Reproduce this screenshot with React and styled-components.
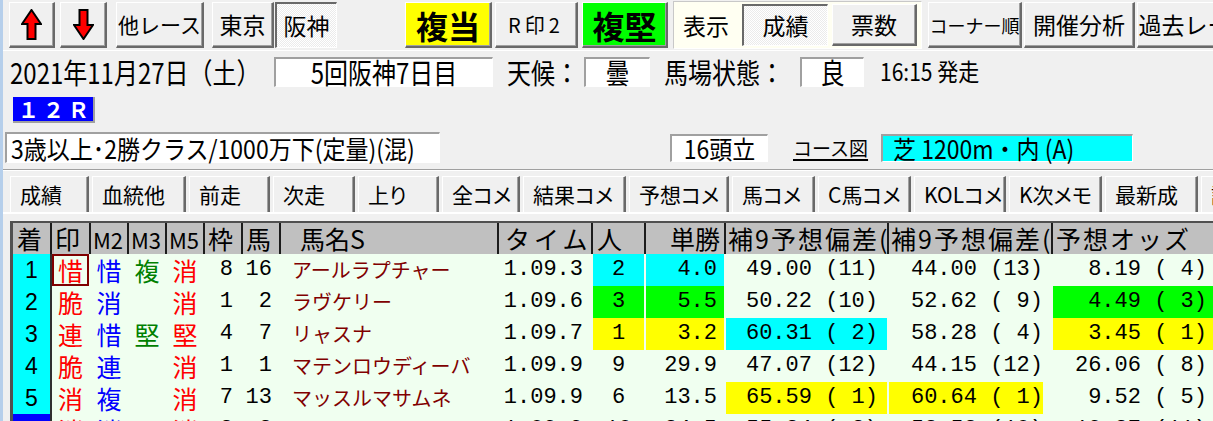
import React from "react";
import styled, { createGlobalStyle, css } from "styled-components";

const JP = `"Noto Sans CJK JP", "Noto Sans", sans-serif`;
const MONO = `"Liberation Mono", "DejaVu Sans Mono", monospace`;
const SANS = `"Liberation Sans", Arial, sans-serif`;

const RED = "#ff0000";
const BLUE = "#0000ff";
const GREEN = "#008000";
const MAROON = "#800000";
const CYAN = "#00ffff";
const LIME = "#00ff00";
const YELLOW = "#ffff00";

const GlobalStyle = createGlobalStyle`
  html, body {
    margin: 0;
    padding: 0;
    background: #f0f0f0;
  }
  body {
    font-family: ${JP};
    color: #000;
  }
`;

// win32-ish bevels
const raised = css`
  box-sizing: border-box;
  border-style: solid;
  border-width: 1px 2px 2px 1px;
  border-color: #ffffff #696969 #696969 #ffffff;
  box-shadow: inset -1px -1px 0 #a0a0a0;
`;

const pressed = css`
  box-sizing: border-box;
  border-style: solid;
  border-width: 2px 1px 1px 2px;
  border-color: #696969 #ffffff #ffffff #696969;
  background-color: #fafafa;
  background-image: conic-gradient(#ffffff 25%, #ebebeb 0 50%, #ffffff 0 75%, #ebebeb 0);
  background-size: 2px 2px;
`;

const sunken = css`
  box-sizing: border-box;
  border-style: solid;
  border-width: 2px 1px 1px 2px;
  border-color: #a0a0a0 #ffffff #ffffff #a0a0a0;
`;

const Window = styled.div`
  width: 1213px;
  height: 421px;
  overflow: hidden;
  box-sizing: border-box;
  border-left: 3px solid #b6cfeb;
  background: #f0f0f0;
  display: flex;
  flex-direction: column;
`;

/* ---------- toolbar ---------- */

const Toolbar = styled.div`
  flex-shrink: 0;
  display: flex;
  align-items: center;
  height: 50px;
  padding-left: 6px;
  border-bottom: 1px solid #ffffff;
`;

const ToolButton = styled.div`
  ${(p) => (p.$on ? pressed : raised)}
  ${(p) => !p.$on && css`background-color: ${p.$bg || "#f0f0f0"};`}
  flex-shrink: 0;
  width: ${(p) => p.$w}px;
  height: ${(p) => p.$h || 46}px;
  margin-left: ${(p) => p.$ml || 0}px;
  display: flex;
  align-items: center;
  justify-content: center;
  font-family: ${JP};
  font-size: ${(p) => p.$fs || 22}px;
  font-weight: ${(p) => (p.$bold ? 700 : 400)};
  letter-spacing: ${(p) => p.$ls || 0}px;
  line-height: 1;
  white-space: nowrap;
  overflow: hidden;
`;

const ViewPanel = styled.div`
  flex-shrink: 0;
  box-sizing: border-box;
  display: flex;
  align-items: center;
  width: 249px;
  height: 48px;
  margin-left: 5px;
  padding: 0 4px 0 9px;
  border: 1px solid;
  border-color: #c8c8c8 #ffffff #ffffff #c8c8c8;
  background: #fffff2;
`;

const PanelLabel = styled.span`
  flex-shrink: 0;
  width: 46px;
  margin-right: 13px;
  font-size: 23px;
  line-height: 1;
`;

const ArrowIcon = ({ down }) => (
  <svg width="21" height="31" viewBox="0 0 21 31">
    <polygon
      points="10.5,1 20,15 14.5,15 14.5,30 6.5,30 6.5,15 1,15"
      fill="#ff0000"
      stroke="#000"
      strokeWidth="2"
      transform={down ? "rotate(180 10.5 15.5)" : undefined}
    />
  </svg>
);

/* ---------- race info ---------- */

const InfoRow = styled.div`
  flex-shrink: 0;
  display: flex;
  align-items: center;
  height: 37px;
  margin-top: 2px;
  padding-left: 7px;
`;

const InfoText = styled.span`
  flex-shrink: 0;
  display: inline-block;
  width: ${(p) => (p.$w ? `${p.$w}px` : "auto")};
  margin-left: ${(p) => p.$ml || 0}px;
  font-size: ${(p) => p.$fs || 24}px;
  line-height: 1;
  white-space: nowrap;
  transform: scaleY(${(p) => p.$sy || 1.2});
`;

const Field = styled.div`
  ${sunken}
  flex-shrink: 0;
  display: flex;
  align-items: center;
  justify-content: ${(p) => (p.$left ? "flex-start" : "center")};
  width: ${(p) => p.$w}px;
  height: ${(p) => p.$h || 30}px;
  margin-left: ${(p) => p.$ml || 0}px;
  padding-left: ${(p) => p.$pl || 0}px;
  background: ${(p) => p.$bg || "#ffffff"};
  font-size: ${(p) => p.$fs || 24}px;
  line-height: 1;
  white-space: nowrap;
`;

const RaceBadge = styled.div`
  flex-shrink: 0;
  box-sizing: border-box;
  display: flex;
  align-items: center;
  width: 82px;
  height: 26px;
  margin: 7px 0 0 10px;
  padding-left: 5px;
  background: #0000ff;
  border-right: 2px solid #a0a0a0;
  border-bottom: 2px solid #a0a0a0;
  color: #ffffff;
  font-size: 21px;
  font-weight: 700;
  letter-spacing: 4px;
  line-height: 1;
`;

const ClassRow = styled.div`
  flex-shrink: 0;
  display: flex;
  align-items: center;
  height: 31px;
  margin-top: 9px;
  padding-left: 2px;
`;

const CourseLink = styled.span`
  flex-shrink: 0;
  width: 77px;
  margin-left: 25px;
  font-size: 19px;
  line-height: 1;
  text-decoration: underline;
  text-decoration-thickness: 2px;
  text-underline-offset: 3px;
  white-space: nowrap;
`;

/* ---------- tabs ---------- */

const Divider = styled.div`
  flex-shrink: 0;
  height: 1px;
  margin-top: 6px;
  background: #a0a0a0;
  border-bottom: 1px solid #ffffff;
`;

const TabStrip = styled.div`
  flex-shrink: 0;
  display: flex;
  gap: 3px;
  height: 36px;
  margin-top: 5px;
  padding-left: 7px;
  border-bottom: 2px solid #ffffff;
`;

const Tab = styled.div`
  flex-shrink: 0;
  box-sizing: border-box;
  display: flex;
  align-items: center;
  width: ${(p) => p.$w}px;
  height: 36px;
  padding-left: 9px;
  border-style: solid;
  border-width: 1px 2px 0 1px;
  border-color: #ffffff #696969 transparent #ffffff;
  box-shadow: inset -1px 0 0 #a0a0a0;
  font-size: 21px;
  font-feature-settings: "palt";
  line-height: 1;
  white-space: nowrap;
  overflow: hidden;
`;

/* ---------- results grid ---------- */

const COLS = "37px 37px 36px 36px 36px 36px 36px 216px 92px 51px 78px 161px 162px 170px";

const Table = styled.div`
  flex-shrink: 0;
  margin: 7px 0 0 7px;
  border-left: 3px solid #505050;
  border-top: 2px solid #505050;
`;

const HeaderRow = styled.div`
  display: grid;
  grid-template-columns: ${COLS};
  column-gap: 2px;
  height: 31px;
  background: #1c1c1c;
`;

const HeaderCell = styled.div`
  display: flex;
  align-items: center;
  justify-content: ${(p) => (p.$right ? "flex-end" : "flex-start")};
  padding: 0 ${(p) => p.$pr || 0}px 0 ${(p) => p.$pl ?? 3}px;
  background: #c0c0c0;
  font-size: ${(p) => p.$fs || 25}px;
  letter-spacing: ${(p) => p.$ls || 0}px;
  line-height: 1;
  white-space: nowrap;
  overflow: hidden;
`;

const BodyRow = styled.div`
  display: grid;
  grid-template-columns: ${COLS};
  column-gap: 2px;
  height: 32px;
  background: #f0fff0;
`;

const RankCell = styled.div`
  display: flex;
  align-items: center;
  justify-content: center;
  background: ${(p) => p.$bg};
  box-shadow: 2px 0 0 #303030;
  font-family: ${SANS};
  font-size: 23px;
  line-height: 1;
`;

const MarkCell = styled.div`
  box-sizing: border-box;
  display: flex;
  align-items: center;
  justify-content: center;
  color: ${(p) => p.$color};
  font-size: 25px;
  line-height: 1;
  ${(p) =>
    p.$selected &&
    css`
      outline: 2px solid ${MAROON};
      outline-offset: -2px;
    `}
`;

const NameCell = styled.div`
  display: flex;
  align-items: center;
  padding-left: 11px;
  color: ${MAROON};
  font-size: 20px;
  line-height: 1;
  white-space: nowrap;
  overflow: hidden;
`;

const NumCell = styled.div`
  box-sizing: border-box;
  display: flex;
  align-items: center;
  justify-content: ${(p) => (p.$center ? "center" : "flex-end")};
  padding-right: ${(p) => p.$pr || 0}px;
  background: ${(p) => p.$bg || "transparent"};
  background-clip: ${(p) => (p.$clip ? "content-box" : "border-box")};
  font-family: ${MONO};
  font-size: 22px;
  line-height: 1;
  white-space: pre;
  overflow: hidden;
`;

const tabs = [
  ["成績", 79], ["血統他", 94], ["前走", 81], ["次走", 82], ["上り", 81],
  ["全コメ", 78], ["結果コメ", 103], ["予想コメ", 100], ["馬コメ", 83],
  ["C馬コメ", 93], ["KOLコメ", 92], ["K次メモ", 93], ["最新成", 93], ["調教", 80],
];

const results = [
  { rank: "1", mark: "惜", m2: "惜", m3: "複", m5: "消", waku: "8", uma: "16", name: "アールラプチャー", time: "1.09.3", pop: "2", win: "4.0", dev1: "49.00 (11)", dev2: "44.00 (13)", odds: "8.19 ( 4)", hl: { pop: CYAN, win: CYAN }, selected: true },
  { rank: "2", mark: "脆", m2: "消", m3: "", m5: "消", waku: "1", uma: "2", name: "ラヴケリー", time: "1.09.6", pop: "3", win: "5.5", dev1: "50.22 (10)", dev2: "52.62 ( 9)", odds: "4.49 ( 3)", hl: { pop: LIME, win: LIME, odds: LIME } },
  { rank: "3", mark: "連", m2: "惜", m3: "堅", m5: "堅", waku: "4", uma: "7", name: "リャスナ", time: "1.09.7", pop: "1", win: "3.2", dev1: "60.31 ( 2)", dev2: "58.28 ( 4)", odds: "3.45 ( 1)", hl: { pop: YELLOW, win: YELLOW, dev1: CYAN, odds: YELLOW } },
  { rank: "4", mark: "脆", m2: "連", m3: "", m5: "消", waku: "1", uma: "1", name: "マテンロウディーバ", time: "1.09.9", pop: "9", win: "29.9", dev1: "47.07 (12)", dev2: "44.15 (12)", odds: "26.06 ( 8)", hl: {} },
  { rank: "5", mark: "消", m2: "複", m3: "", m5: "消", waku: "7", uma: "13", name: "マッスルマサムネ", time: "1.09.9", pop: "6", win: "13.5", dev1: "65.59 ( 1)", dev2: "60.64 ( 1)", odds: "9.52 ( 5)", hl: { dev1: YELLOW, dev2: YELLOW } },
  { rank: "6", rankBg: "#0000ff", mark: "消", m2: "消", m3: "", m5: "消", waku: "2", uma: "3", name: "メイショウツツジ", time: "1.09.9", pop: "10", win: "24.5", dev1: "55.34 ( 3)", dev2: "53.53 (10)", odds: "19.37 (11)", hl: {} },
];

export default function App() {
  return (
    <>
      <GlobalStyle />
      <Window>
        <Toolbar>
          <ToolButton $w={46}><ArrowIcon /></ToolButton>
          <ToolButton $w={47} $ml={5}><ArrowIcon down /></ToolButton>
          <ToolButton $w={88} $ml={9} $fs={21}>他レース</ToolButton>
          <ToolButton $w={62} $ml={8} $fs={23}>東京</ToolButton>
          <ToolButton $w={62} $ml={1} $fs={23} $on>阪神</ToolButton>
          <ToolButton $w={87} $ml={68} $fs={32} $bold $bg={YELLOW}>複当</ToolButton>
          <ToolButton $w={83} $ml={3} $fs={20} $ls={4}>R印2</ToolButton>
          <ToolButton $w={86} $ml={4} $fs={32} $bold $bg={LIME}>複堅</ToolButton>
          <ViewPanel>
            <PanelLabel>表示</PanelLabel>
            <ToolButton $w={86} $h={42} $fs={23} $on>成績</ToolButton>
            <ToolButton $w={85} $h={42} $ml={4} $fs={23}>票数</ToolButton>
          </ViewPanel>
          <ToolButton $w={94} $ml={6} $fs={18}>コーナー順</ToolButton>
          <ToolButton $w={111} $ml={2} $fs={23}>開催分析</ToolButton>
          <ToolButton $w={118} $ml={2} $fs={23}>過去レース</ToolButton>
        </Toolbar>

        <InfoRow>
          <InfoText $w={264}>2021年11月27日（土）</InfoText>
          <Field $w={219}><InfoText>5回阪神7日目</InfoText></Field>
          <InfoText $w={77} $ml={14}>天候：</InfoText>
          <Field $w={66}><InfoText>曇</InfoText></Field>
          <InfoText $w={136} $ml={14}>馬場状態：</InfoText>
          <Field $w={64}><InfoText>良</InfoText></Field>
          <InfoText $ml={16} $fs={21} $sy={1.15}>16:15 発走</InfoText>
        </InfoRow>

        <RaceBadge>１２Ｒ</RaceBadge>

        <ClassRow>
          <Field $w={435} $h={31} $left $pl={4} $fs={23}>
            <InfoText $fs={23} $sy={1.1}>3歳以上･2勝クラス/1000万下(定量)(混)</InfoText>
          </Field>
          <Field $w={98} $h={28} $ml={230} $fs={23}>
            <InfoText $fs={23} $sy={1.1}>16頭立</InfoText>
          </Field>
          <CourseLink>コース図</CourseLink>
          <Field $w={252} $h={28} $ml={11} $bg={CYAN} $left $pl={10} $fs={23}>
            <InfoText $fs={23} $sy={1.1}>芝 1200m・内 (A)</InfoText>
          </Field>
        </ClassRow>

        <Divider />

        <TabStrip>
          {tabs.map(([label, w]) => (
            <Tab key={label} $w={w}>{label}</Tab>
          ))}
        </TabStrip>

        <Table>
          <HeaderRow>
            <HeaderCell $pl={4}>着</HeaderCell>
            <HeaderCell>印</HeaderCell>
            <HeaderCell $fs={22} $pl={2}>M2</HeaderCell>
            <HeaderCell $fs={22} $pl={2}>M3</HeaderCell>
            <HeaderCell $fs={22} $pl={2}>M5</HeaderCell>
            <HeaderCell>枠</HeaderCell>
            <HeaderCell>馬</HeaderCell>
            <HeaderCell $pl={19}>馬名S</HeaderCell>
            <HeaderCell $pl={6} $ls={4}>タイム</HeaderCell>
            <HeaderCell $pl={4}>人</HeaderCell>
            <HeaderCell $right $pr={4}>単勝</HeaderCell>
            <HeaderCell $pl={2} $ls={2}>補9予想偏差(</HeaderCell>
            <HeaderCell $pl={2} $ls={2}>補9予想偏差(</HeaderCell>
            <HeaderCell $pl={3} $ls={2}>予想オッズ</HeaderCell>
          </HeaderRow>
          {results.map((r) => (
            <BodyRow key={r.rank}>
              <RankCell $bg={r.rankBg || CYAN}>{r.rank}</RankCell>
              <MarkCell $color={RED} $selected={r.selected}>{r.mark}</MarkCell>
              <MarkCell $color={BLUE}>{r.m2}</MarkCell>
              <MarkCell $color={GREEN}>{r.m3}</MarkCell>
              <MarkCell $color={RED}>{r.m5}</MarkCell>
              <NumCell $pr={8}>{r.waku}</NumCell>
              <NumCell $pr={7}>{r.uma}</NumCell>
              <NameCell>{r.name}</NameCell>
              <NumCell $pr={8}>{r.time}</NumCell>
              <NumCell $center $bg={r.hl.pop}>{r.pop}</NumCell>
              <NumCell $pr={7} $bg={r.hl.win}>{r.win}</NumCell>
              <NumCell $pr={9} $bg={r.hl.dev1}>{r.dev1}</NumCell>
              <NumCell $pr={8} $clip $bg={r.hl.dev2}>{r.dev2}</NumCell>
              <NumCell $pr={16} $bg={r.hl.odds}>{r.odds}</NumCell>
            </BodyRow>
          ))}
        </Table>
      </Window>
    </>
  );
}
